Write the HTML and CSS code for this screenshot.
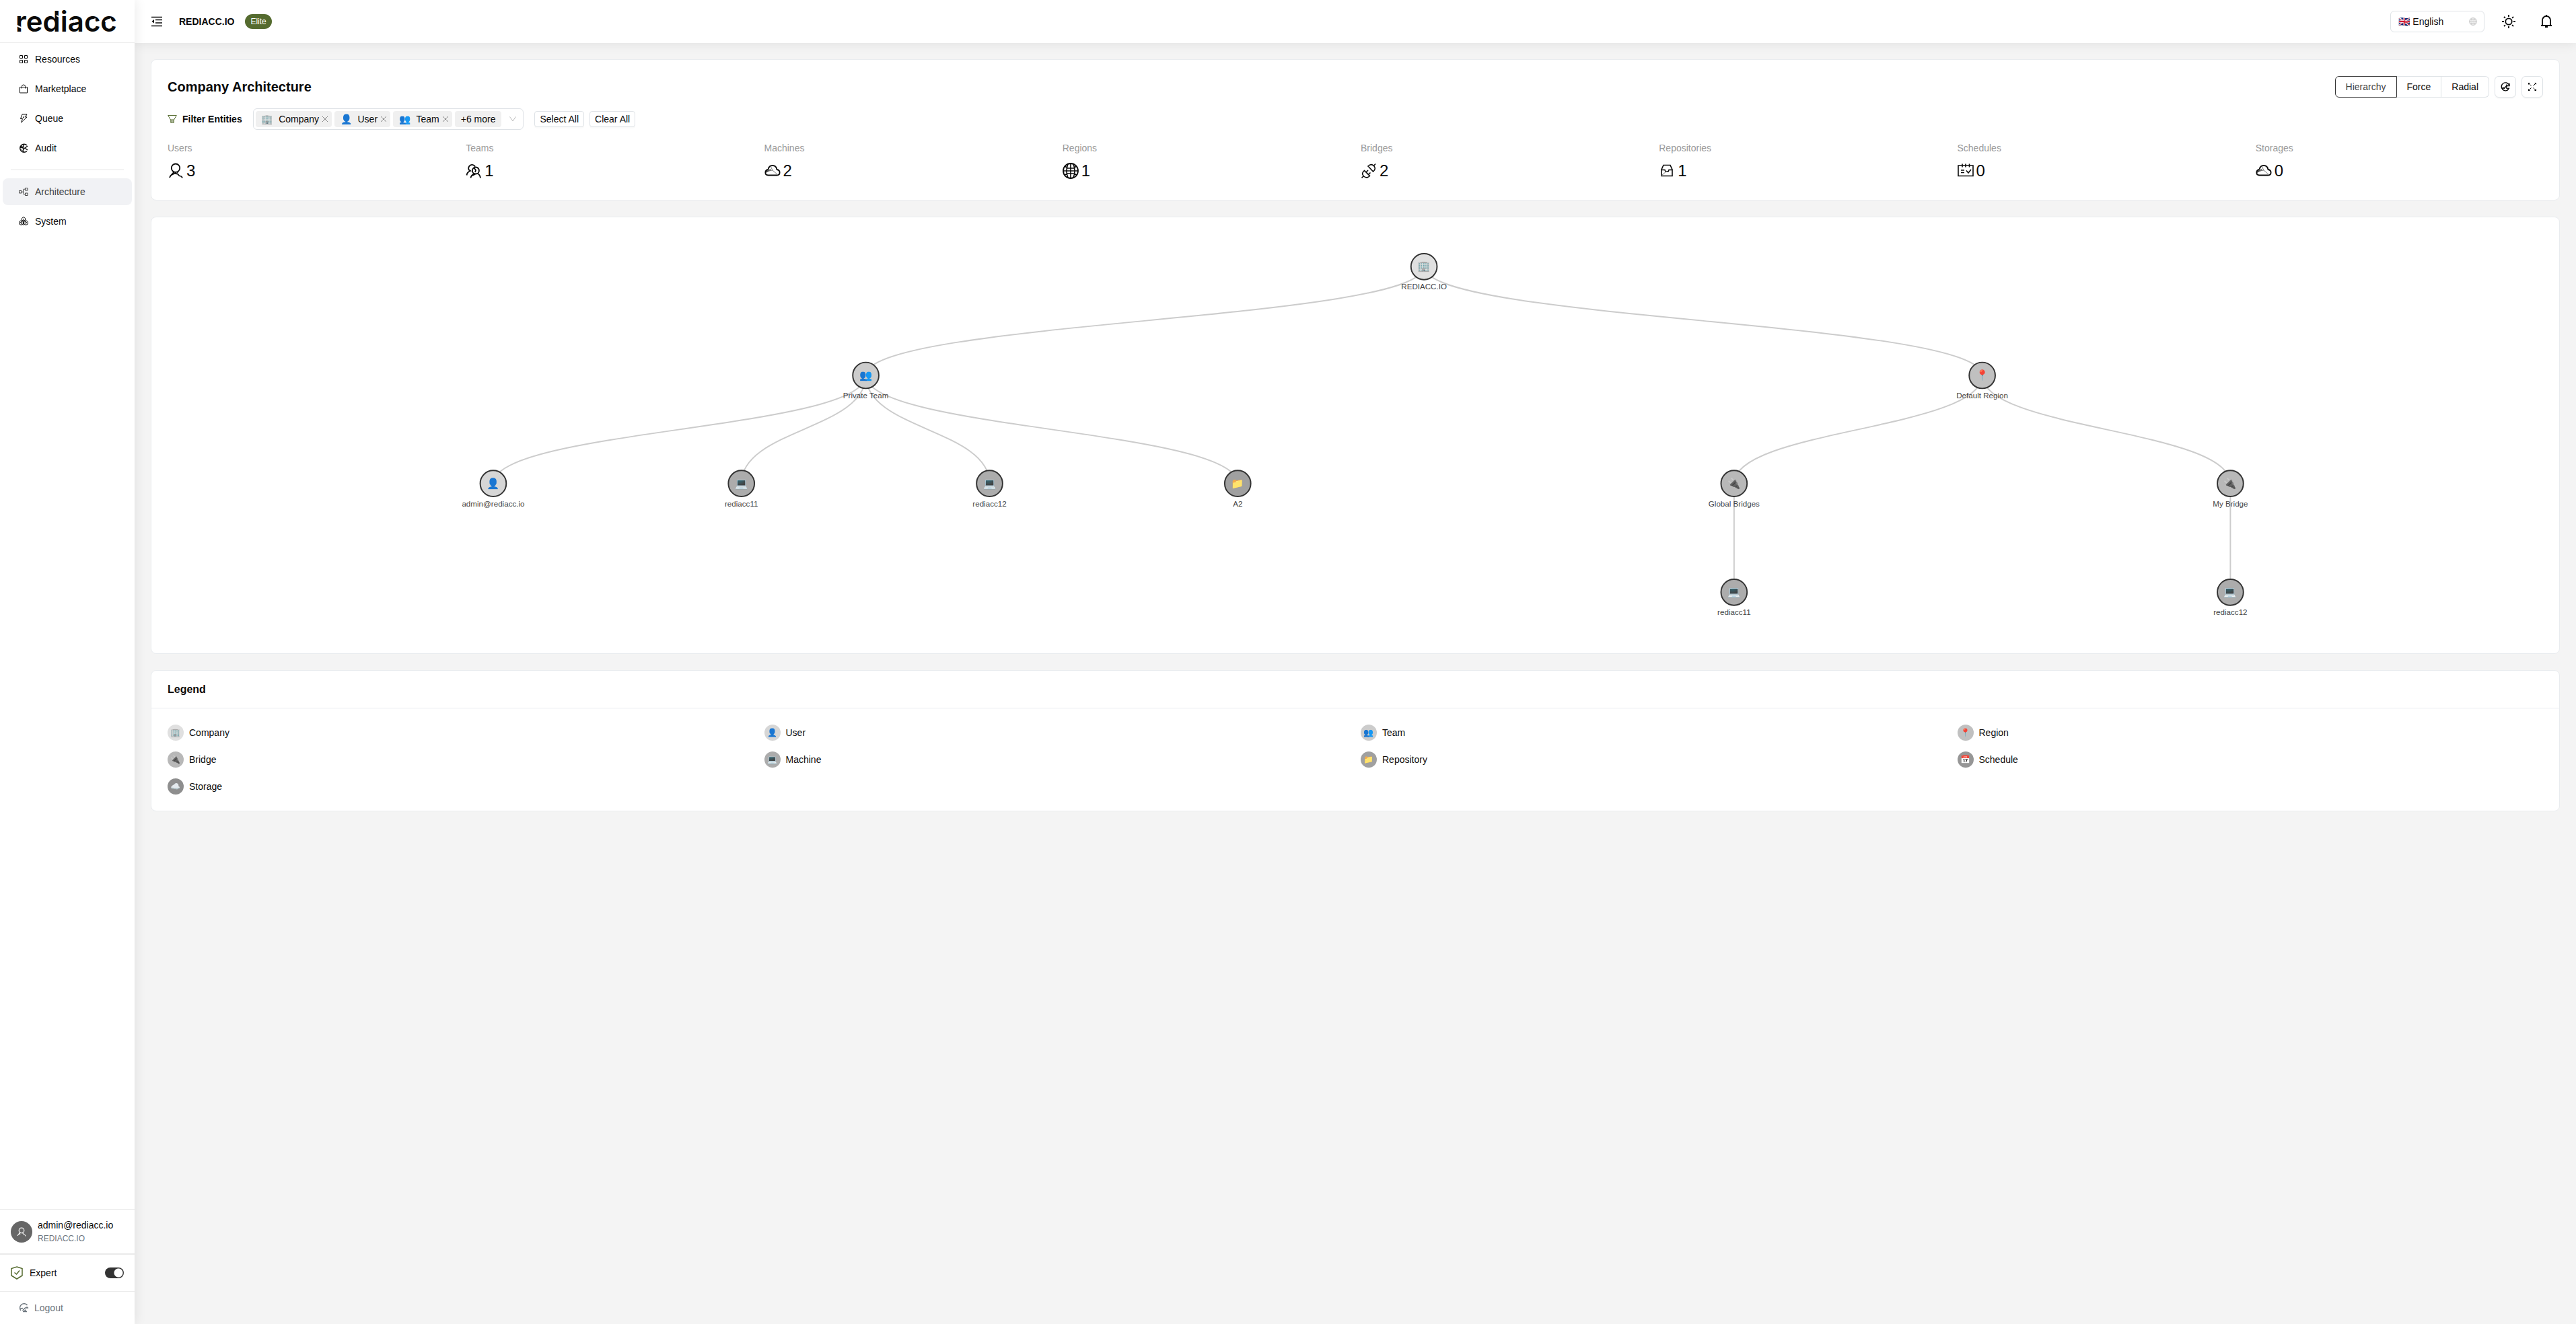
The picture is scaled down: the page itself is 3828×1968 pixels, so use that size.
FILE: index.html
```html
<!DOCTYPE html>
<html lang="en">
<head>
<meta charset="utf-8">
<meta name="viewport" content="width=device-width, initial-scale=1">
<title>Company Architecture - Rediacc</title>
<link rel="stylesheet" href="styles.css">
</head>
<body>
<div class="app">
  <aside class="sidebar">
    <a class="logo" href="#" aria-label="rediacc">
      <svg width="150" height="32" viewBox="0 0 150 32">
        <text class="logo-text" x="-2" y="31">rediacc</text>
        <g class="logo-cuts">
          <path d="M-2 21l10 5M27 25l10-4M59 7l7 4M80 14l7 3M108 16l9-4M131 16l9-4"/>
        </g>
      </svg>
    </a>
    <nav class="menu">
      <a class="menu-item" href="#">
        <svg class="icon" viewBox="0 0 14 14"><path d="M1.5 1.5h4v4h-4zM8.500 1.500h4v4h-4zM1.500 8.500h4v4h-4zM8.500 8.500h4v4h-4z"/></svg>
        Resources</a>
      <a class="menu-item" href="#">
        <svg class="icon" viewBox="0 0 14 14"><path d="M1.500 4.500h11v8.500h-11zM4.500 6.500V3.500a2.500 2.500 0 0 1 5 0v3"/></svg>
        Marketplace</a>
      <a class="menu-item" href="#">
        <svg class="icon" viewBox="0 0 14 14"><path d="M5 1h7L9.500 5H12L3.500 13l2-5.500H2.500zM8 3.500L6.500 6H8"/></svg>
        Queue</a>
      <a class="menu-item" href="#">
        <svg class="icon icon-bold" viewBox="0 0 14 14"><path d="M12 3A6 6 0 1 0 12 11.500M13 4L9 7l4 3M3 3l3.500 4L2 6M7 1.500v3l-2 2 3 1-2 3 1 2.500M4 9.500L2.500 11"/></svg>
        Audit</a>
      <hr class="menu-rule">
      <a class="menu-item active" href="#" aria-current="page">
        <svg class="icon" viewBox="0 0 14 14"><path d="M.5 5.500h3.500v3.500H.500zM9.500 1.500h3.500v3.500H9.500zM9.500 9h3.500v3.500H9.500zM4 7.200h2.500M9.500 3.200h-2c-1 0-1 .5-1 1.500v4.800c0 1 0 1.300 1 1.300h2"/></svg>
        Architecture</a>
      <a class="menu-item" href="#">
        <svg class="icon" viewBox="0 0 14 14"><path d="M4.500 5V2.500l2.500-2 2.500 2V5L7 6.500zM.7 11V7.500l2.800-2 2.800 2V11l-2.800 1.500zM7.700 11V7.500l2.800-2 2.800 2V11l-2.800 1.500zM7 3v10M3.500 7.500v4M10.500 7.500v4M2 9l3-2M9 7l3 2"/></svg>
        System</a>
    </nav>
    <div class="account">
      <span class="avatar">
        <svg class="icon" viewBox="0 0 24 24"><path class="thick" d="M12 2a6.500 6.500 0 1 1 0 13 6.500 6.500 0 0 1 0-13zM8 13c1 2 2 2 3.500 2M16 13c-1 2-2 2-3 2M8 14c-2 3-5 4-6 8M9 17l-3 1M15 15l3 4M19 19c2 1 3 2 3 4"/></svg>
      </span>
      <div class="account-text">
        <div class="account-mail">admin@rediacc.io</div>
        <div class="account-org">REDIACC.IO</div>
      </div>
    </div>
    <label class="expert">
      <svg class="shield" viewBox="0 0 18 20"><path d="M9 1l8 2.500v10.500L9 19l-8-5V3.500zM5.500 9.500l3 2.500L13 6.500"/></svg>
      <span class="expert-text">Expert</span>
      <input class="switch" type="checkbox" role="switch" checked>
    </label>
    <button class="logout" type="button">
      <svg class="icon icon-bold" viewBox="0 0 14 14"><path d="M2 11A6 6 0 1 1 11.500 3M12.500 7H8.500l-4 4M10.500 5.500l2.500 2M1 8.500L5 7.500M5 12.500h6"/><path class="solid" d="M5 13l4-4 1 4z"/></svg>
      Logout</button>
  </aside>

  <div class="page">
    <header class="topbar">
      <button class="bare fold" type="button" aria-label="Toggle menu">
        <svg class="icon" viewBox="0 0 16 16"><path d="M0 1.500h16M6 5.500h10M6 10h10M0 14.500h16"/><path class="solid" d="M4 5v5.500L.5 7.700z"/></svg>
      </button>
      <strong class="org">REDIACC.IO</strong>
      <span class="plan">Elite</span>
      <div class="topbar-tools">
        <div class="language">
          <select class="language-select" aria-label="Language"><option>🇬🇧 English</option></select>
          <svg class="icon globe" viewBox="0 0 24 24"><circle class="thick" cx="12" cy="12" r="11"/><path class="thick" d="M1 12h22M12 1v22M3 7h18M3 17h18M8 2C5 8 5 16 8 22M16 2c3 6 3 14 0 20"/></svg>
        </div>
        <button class="bare tool" type="button" aria-label="Theme">
          <svg class="icon" viewBox="0 0 20 20"><circle class="mid" cx="10" cy="10" r="4.700"/><path class="mid" d="M10 0v3M10 17v3M0 10h3M17 10h3M2.900 2.900l2 2M15.100 15.100l2 2M2.900 17.100l2-2M15.100 4.900l2-2"/></svg>
        </button>
        <button class="bare tool" type="button" aria-label="Notifications">
          <svg class="icon" viewBox="0 0 20 20"><path class="mid" d="M4 15.500V8a6 6 0 0 1 12 0v7.500M2 16h16M10 0v2.500M8 18h4"/></svg>
        </button>
      </div>
    </header>

    <main class="content">
      <section class="card summary">
        <div class="summary-head">
          <h1 class="title">Company Architecture</h1>
          <div class="view-tools">
            <fieldset class="views" aria-label="Layout">
              <label class="view"><input type="radio" name="view" checked><span>Hierarchy</span></label>
              <label class="view"><input type="radio" name="view"><span>Force</span></label>
              <label class="view"><input type="radio" name="view"><span>Radial</span></label>
            </fieldset>
            <button class="btn btn-square" type="button" aria-label="Refresh">
              <svg class="icon icon-bold" viewBox="0 0 14 14"><path d="M12.500 4A6 6 0 1 0 12 10.500M13 2v3.500H9.500M5 10l4-5v5M9 3.500v3M10 10l3-1"/><path class="solid" d="M1 8.500l5-1-2.500 4z"/></svg>
            </button>
            <button class="btn btn-square" type="button" aria-label="Full screen">
              <svg class="icon" viewBox="0 0 14 14"><path d="M2 2l3.500 3.500M12 2L8.500 5.500M2 12l3.500-3.500M12 12L8.500 8.500"/><path class="solid" d="M1 1h3L1 4zM13 1v3l-3-3zM1 13v-3l3 3zM13 13h-3l3-3z"/></svg>
            </button>
          </div>
        </div>

        <div class="filters">
          <div class="filter-label" id="filter-label">
            <svg class="icon" viewBox="0 0 14 14"><path d="M.700 1.500h12.600L9.500 8h-5zM4.800 8v4.500h4.400V8M4.800 10h4.400"/></svg>
            Filter Entities
          </div>
          <div class="tag-select" role="group" aria-labelledby="filter-label">
            <span class="tag"><span class="emoji">🏢</span>Company<button class="bare tag-close" type="button" aria-label="Remove Company"><svg viewBox="0 0 10 10"><path d="M1 1l8 8M9 1L1 9"/></svg></button></span>
            <span class="tag"><span class="emoji">👤</span>User<button class="bare tag-close" type="button" aria-label="Remove User"><svg viewBox="0 0 10 10"><path d="M1 1l8 8M9 1L1 9"/></svg></button></span>
            <span class="tag"><span class="emoji">👥</span>Team<button class="bare tag-close" type="button" aria-label="Remove Team"><svg viewBox="0 0 10 10"><path d="M1 1l8 8M9 1L1 9"/></svg></button></span>
            <span class="tag tag-more">+6 more</span>
            <svg class="chevron" viewBox="0 0 12 12"><path d="M1.500 2.500L6 9l4.500-6.500"/></svg>
          </div>
          <div class="filter-actions">
            <button class="btn btn-small" type="button">Select All</button>
            <button class="btn btn-small" type="button">Clear All</button>
          </div>
        </div>

        <div class="stats">
          <div class="stat"><div class="stat-name">Users</div><div class="stat-value">
            <svg viewBox="0 0 24 24"><path d="M12 1.500a6 6 0 1 1 0 12.500 6 6 0 0 1 0-12.500zM8 13l2 1.500M16 13l-2 1.500M9 14c-2 4-5 4-6 8M6 18l4-2M10 15.500l5 1 3 3.500M19 19.500c1.500.5 2.500 1.500 3 3"/></svg>3</div></div>
          <div class="stat"><div class="stat-name">Teams</div><div class="stat-value">
            <svg viewBox="0 0 24 24"><path d="M14 5.500a5 5 0 1 0-9 5.500M5 10.500l2 1.500c-3 1-5 3-5.500 6.500M15 6.500a5 5 0 1 1-.1 10 5 5 0 0 1 .1-10zM12 7l3 4-1 3M7.500 22.500c.5-4 3-5 5-6M10 19l4-2M17.500 16c2.500 1 4 3.500 4.500 6.500"/></svg>1</div></div>
          <div class="stat"><div class="stat-name">Machines</div><div class="stat-value">
            <svg viewBox="0 0 24 24"><path d="M5.500 18.500C0 18 0 11 5.500 10 7 2 17 2 18.500 10c5.500 1 5.500 8 0 8.500zM2 14l7-4"/><path class="hair" d="M2 14l8-3-5-1M9 5l3 6-8 1M12 11l8 7"/></svg>2</div></div>
          <div class="stat"><div class="stat-name">Regions</div><div class="stat-value">
            <svg viewBox="0 0 24 24"><circle cx="12" cy="12" r="11"/><path class="fine" d="M1 12h22M12 1v22M3.500 5l4 3h9l4-3M3 18l5-2h9l4 2M8 2c-2.500 6-2.500 14 0 20M16 2c2.500 6 2.500 14 0 20"/></svg>1</div></div>
          <div class="stat"><div class="stat-name">Bridges</div><div class="stat-value">
            <svg viewBox="0 0 24 24"><path class="fine" d="M1.500 22.500l3-3M4.500 20c-3-3-2-6 1-8.500l8 8c-3 3-6 3-9 .5zM8 14l3-3M11.500 17.500l3-3M11 5c3-3 6-3 8.500-.5s2.500 6-1 8.500zM19.500 4.500l2.500-3"/></svg>2</div></div>
          <div class="stat"><div class="stat-name">Repositories</div><div class="stat-value">
            <svg viewBox="0 0 24 24"><path class="fine" d="M4 19.500V10l3-6.500h10l3 6.500v9.500zM4 10.500h5l1 2.500h4l1-2.500h5"/><path class="hair" d="M4 19l8-7"/></svg>1</div></div>
          <div class="stat"><div class="stat-name">Schedules</div><div class="stat-value">
            <svg viewBox="0 0 24 24"><path class="fine" d="M1 4h22v15.500H1zM7 1.500v5M12 1.500v5M17.500 1.500v5M5 11h5M5 14.500h5M13 11.500l3 3.500 4-5"/></svg>0</div></div>
          <div class="stat"><div class="stat-name">Storages</div><div class="stat-value">
            <svg viewBox="0 0 24 24"><path d="M5.500 18.500C0 18 0 11 5.500 10 7 2 17 2 18.500 10c5.500 1 5.500 8 0 8.500zM2 14l7-4"/><path class="hair" d="M2 14l8-3-5-1M9 5l3 6-8 1M12 11l8 7"/></svg>0</div></div>
        </div>
      </section>

      <section class="card">
        <!-- Entity tree: siblings are 381 units apart, levels 167 units -->
        <svg class="tree" viewBox="0 0 3647 620" role="img" aria-label="Company hierarchy">
          <g class="links">
            <path d="M1929 51C1929 134 1072 134 1072 218"/>
            <path d="M1929 51C1929 134 2786 134 2786 218"/>
            <path d="M1072 218C1072 301 500 301 500 384"/>
            <path d="M1072 218C1072 301 881 301 881 384"/>
            <path d="M1072 218C1072 301 1262 301 1262 384"/>
            <path d="M1072 218C1072 301 1643 301 1643 384"/>
            <path d="M2786 218C2786 301 2405 301 2405 384"/>
            <path d="M2786 218C2786 301 3167 301 3167 384"/>
            <path d="M2405 384V551"/>
            <path d="M3167 384V551"/>
          </g>
          <g class="node company" transform="translate(1929 51)"><circle r="20"/><text class="glyph" y="5">🏢</text><text y="35">REDIACC.IO</text></g>
          <g class="node team" transform="translate(1072 218)"><circle r="20"/><text class="glyph" y="5">👥</text><text y="35">Private Team</text></g>
          <g class="node region" transform="translate(2786 218)"><circle r="20"/><text class="glyph" y="5">📍</text><text y="35">Default Region</text></g>
          <g class="node user" transform="translate(500 384)"><circle r="20"/><text class="glyph" y="5">👤</text><text y="35">admin@rediacc.io</text></g>
          <g class="node machine" transform="translate(881 384)"><circle r="20"/><text class="glyph" y="5">💻</text><text y="35">rediacc11</text></g>
          <g class="node machine" transform="translate(1262 384)"><circle r="20"/><text class="glyph" y="5">💻</text><text y="35">rediacc12</text></g>
          <g class="node repository" transform="translate(1643 384)"><circle r="20"/><text class="glyph" y="5">📁</text><text y="35">A2</text></g>
          <g class="node bridge" transform="translate(2405 384)"><circle r="20"/><text class="glyph" y="5">🔌</text><text y="35">Global Bridges</text></g>
          <g class="node bridge" transform="translate(3167 384)"><circle r="20"/><text class="glyph" y="5">🔌</text><text y="35">My Bridge</text></g>
          <g class="node machine" transform="translate(2405 551)"><circle r="20"/><text class="glyph" y="5">💻</text><text y="35">rediacc11</text></g>
          <g class="node machine" transform="translate(3167 551)"><circle r="20"/><text class="glyph" y="5">💻</text><text y="35">rediacc12</text></g>
        </svg>
      </section>

      <section class="card legend">
        <h2 class="legend-title">Legend</h2>
        <ul class="legend-list">
          <li class="legend-item"><span class="dot company">🏢</span>Company</li>
          <li class="legend-item"><span class="dot user">👤</span>User</li>
          <li class="legend-item"><span class="dot team">👥</span>Team</li>
          <li class="legend-item"><span class="dot region">📍</span>Region</li>
          <li class="legend-item"><span class="dot bridge">🔌</span>Bridge</li>
          <li class="legend-item"><span class="dot machine">💻</span>Machine</li>
          <li class="legend-item"><span class="dot repository">📁</span>Repository</li>
          <li class="legend-item"><span class="dot schedule">📅</span>Schedule</li>
          <li class="legend-item"><span class="dot storage">☁️</span>Storage</li>
        </ul>
      </section>
    </main>
  </div>
</div>
</body>
</html>
```
FILE: styles.css
```css
* { box-sizing: border-box; }

body {
  margin: 0;
  background: #f4f4f4;
  color: #0a0a0a;
  font: 14px/22px "Liberation Sans", Arial, "Noto Color Emoji", sans-serif;
}

button, select { font: inherit; color: inherit; }
svg { display: block; fill: none; }
a { color: inherit; text-decoration: none; }

.app { display: flex; min-height: 100vh; }
.page { flex: 1; min-width: 0; }

.icon {
  width: 14px;
  height: 14px;
  flex: none;
  stroke: currentColor;
  stroke-width: 1;
}
.icon-bold { stroke-width: 1.4; }
.icon .mid { stroke-width: 1.8; }
.icon .thick { stroke-width: 2; }
.icon .solid { fill: currentColor; stroke: none; }

.bare {
  display: flex;
  align-items: center;
  justify-content: center;
  padding: 0;
  border: 0;
  background: none;
  cursor: pointer;
}

/* Sidebar */
.sidebar {
  position: relative;
  display: flex;
  flex-direction: column;
  width: 200px;
  flex: none;
  background: #fff;
  box-shadow: 2px 0 16px rgba(0, 0, 0, .08);
}
.logo {
  display: flex;
  align-items: center;
  justify-content: center;
  height: 64px;
  border-bottom: 1px solid #eaeaea;
}
.logo svg { overflow: visible; }
.logo-text { font: 600 42px Inter, sans-serif; fill: #0a0a0a; }
.logo-cuts { stroke: #fff; stroke-width: 2; }

.menu { flex: 1; display: flex; flex-direction: column; gap: 4px; padding: 4px; }
.menu-item {
  display: flex;
  align-items: center;
  gap: 10px;
  height: 40px;
  padding: 0 24px;
  border-radius: 8px;
}
.menu-item.active { background: #f1f2f5; color: #404040; }
.menu-rule { width: 168px; margin: 8px auto; border: 0; border-top: 1px solid #e4e4e4; }

.account {
  display: flex;
  align-items: center;
  gap: 8px;
  padding: 12px 16px;
  border-top: 1px solid #eaeaea;
  border-bottom: 1px solid #eaeaea;
}
.avatar {
  display: flex;
  align-items: center;
  justify-content: center;
  width: 32px;
  height: 32px;
  border-radius: 50%;
  background: #666;
  color: #fff;
}
.account-mail { line-height: 22px; }
.account-org { font-size: 12px; line-height: 19px; color: #6c757d; }

.expert {
  display: flex;
  align-items: center;
  gap: 10px;
  height: 56px;
  padding: 0 16px;
  border-top: 1px solid #eaeaea;
  border-bottom: 1px solid #eaeaea;
}
.expert-text { flex: 1; }
.shield { width: 18px; height: 20px; stroke: #556b2f; }
.shield path { stroke-width: 1.5; }
.switch {
  appearance: none;
  width: 28px;
  height: 16px;
  margin: 0;
  border-radius: 8px;
  background: radial-gradient(circle at 20px 8px, #fff 6px, #333 7px);
}
.logout {
  display: flex;
  align-items: center;
  gap: 8px;
  height: 48px;
  padding: 0 29px;
  border: 0;
  background: none;
  color: #6c757d;
}

/* Top bar */
.topbar {
  display: flex;
  align-items: center;
  height: 64px;
  padding: 0 24px;
  background: #fff;
  box-shadow: 0 2px 16px rgba(0, 0, 0, .08);
}
.fold { width: 18px; margin-right: 24px; }
.fold .icon { width: 16px; height: 16px; stroke-width: 1.4; }
.org { margin-right: 16px; }
.plan {
  padding: 0 8px;
  border-radius: 11px;
  background: #556b2f;
  color: #fff;
  font-size: 12px;
}
.topbar-tools { display: flex; align-items: center; gap: 16px; margin-left: auto; }
.language { position: relative; width: 140px; }
.language-select {
  display: block;
  appearance: none;
  width: 100%;
  height: 32px;
  padding: 0 11px;
  border: 1px solid #dee2e6;
  border-radius: 6px;
  background: #fff;
}
.globe { position: absolute; top: 10px; right: 11px; width: 12px; height: 12px; color: #ccc; }
.tool { width: 40px; height: 40px; }
.tool .icon { width: 20px; height: 20px; }

/* Cards */
.content { display: flex; flex-direction: column; gap: 24px; padding: 24px; }
.card {
  padding: 24px;
  border: 1px solid #e9ecef;
  border-radius: 8px;
  background: #fff;
}
.summary { display: flex; flex-direction: column; gap: 16px; }
.summary-head { display: flex; align-items: center; justify-content: space-between; }
.title { margin: 0; font-size: 20px; line-height: 32px; }
.view-tools { display: flex; gap: 8px; }

.btn {
  display: flex;
  align-items: center;
  justify-content: center;
  padding: 0;
  border: 1px solid #dee2e6;
  border-radius: 6px;
  background: #fff;
  box-shadow: 0 2px 0 rgba(0, 0, 0, .02);
  cursor: pointer;
}
.btn-square { width: 32px; height: 32px; }
.btn-small { height: 24px; padding: 0 7px; border-radius: 4px; }

.views { display: flex; margin: 0; padding: 0; border: 0; }
.view { position: relative; }
.view input { position: absolute; inset: 0; margin: 0; opacity: 0; }
.view span {
  display: block;
  padding: 0 15px;
  border: 1px solid #dee2e6;
  border-left-width: 0;
  line-height: 30px;
}
.view input:checked + span { border: 1px solid #333; color: #444; }
.view:first-child span { border-radius: 6px 0 0 6px; }
.view:last-child span { border-radius: 0 6px 6px 0; }

.filters { display: flex; align-items: center; gap: 16px; }
.filter-label { display: flex; align-items: center; gap: 8px; font-weight: bold; }
.filter-label .icon { color: #556b2f; }
.tag-select {
  display: flex;
  align-items: center;
  gap: 4px;
  height: 32px;
  padding: 0 9px 0 3px;
  border: 1px solid #dee2e6;
  border-radius: 6px;
}
.tag {
  display: flex;
  align-items: center;
  height: 24px;
  padding: 0 5px 0 9px;
  border-radius: 4px;
  background: #f0f0f0;
}
.tag-more { padding-right: 9px; }
.emoji { margin-right: 8px; }
.tag-close { margin-left: 4px; }
.tag-close svg { width: 10px; height: 10px; stroke: #888; }
.chevron { width: 12px; height: 12px; margin-left: 7px; stroke: #bbb; }
.filter-actions { display: flex; gap: 8px; }

.stats { display: grid; grid-template-columns: repeat(8, 1fr); gap: 16px; }
.stat-name { margin-bottom: 4px; color: #999; }
.stat-value { display: flex; align-items: center; gap: 4px; font-size: 24px; line-height: 38px; }
.stat-value svg { width: 24px; height: 24px; stroke: #0a0a0a; stroke-width: 1.8; }
.stat-value .fine { stroke-width: 1.6; }
.stat-value .hair { stroke-width: 1; stroke: #777; }

/* Tree */
.tree { width: 100%; height: auto; }
.links path { stroke: #ccc; stroke-width: 2; }
.node circle { stroke: #333; stroke-width: 2; }
.node text { fill: #444; font-size: 12px; text-anchor: middle; }
.node .glyph { font-size: 16px; }

.company { fill: #e0e0e0; background: #e0e0e0; }
.user { fill: #d6d6d6; background: #d6d6d6; }
.team { fill: #ccc; background: #ccc; }
.region { fill: #c0c0c0; background: #c0c0c0; }
.bridge { fill: #b8b8b8; background: #b8b8b8; }
.machine { fill: #acacac; background: #acacac; }
.repository { fill: #a0a0a0; background: #a0a0a0; }
.schedule { background: #969696; }
.storage { background: #8e8e8e; }

/* Legend */
.legend { padding: 0; }
.legend-title {
  margin: 0;
  padding: 0 24px;
  border-bottom: 1px solid #e9ecef;
  font-size: 16px;
  line-height: 55px;
}
.legend-list {
  display: grid;
  grid-template-columns: repeat(4, 1fr);
  gap: 16px;
  margin: 0;
  padding: 24px;
  list-style: none;
}
.legend-item { display: flex; align-items: center; gap: 8px; height: 24px; }
.dot {
  display: flex;
  align-items: center;
  justify-content: center;
  width: 24px;
  height: 24px;
  border-radius: 50%;
  font-size: 12px;
}
```
